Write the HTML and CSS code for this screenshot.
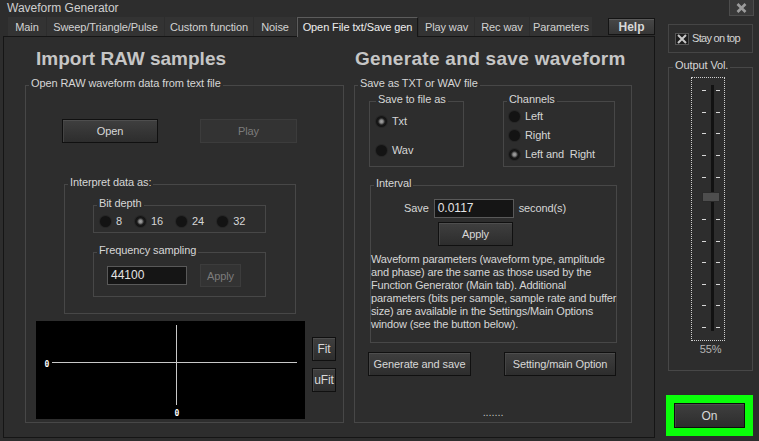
FILE: index.html
```html
<!DOCTYPE html>
<html>
<head>
<meta charset="utf-8">
<title>Waveform Generator</title>
<link rel="stylesheet" href="styles.css">
</head>
<body>
<div class="window">
  <header class="titlebar">
    <span class="title">Waveform Generator</span>
    <button class="close" aria-label="Close">
      <svg width="11" height="10" viewBox="0 0 11 10"><path d="M1.5 1 L9.5 9 M9.5 1 L1.5 9" stroke="#9c9c9c" stroke-width="2.6" fill="none"/></svg>
    </button>
  </header>
  <div class="content">
    <div class="main">
      <nav class="tabs">
        <span class="tab t-main">Main</span>
        <span class="tab t-sweep">Sweep/Triangle/Pulse</span>
        <span class="tab t-custom">Custom function</span>
        <span class="tab t-noise">Noise</span>
        <span class="tab t-open active">Open File txt/Save gen</span>
        <span class="tab t-play">Play wav</span>
        <span class="tab t-rec">Rec wav</span>
        <span class="tab t-params">Parameters</span>
        <button class="help">Help</button>
      </nav>
      <section class="panel">
        <div class="col col-left">
          <h2 class="heading h-left">Import RAW samples</h2>
          <div class="group g-open">
            <span class="legend lg-open">Open RAW waveform data from text file</span>
            <div class="open-row">
              <button class="btn b-open">Open</button>
              <button class="btn disabled b-play">Play</button>
            </div>
            <div class="group g-interpret">
              <span class="legend lg-3">Interpret data as:</span>
              <div class="group g-bits">
                <span class="legend lg-3">Bit depth</span>
                <div class="bits-row">
                  <span class="radio"><span class="dot"></span>8</span>
                  <span class="radio"><span class="dot on"></span>16</span>
                  <span class="radio"><span class="dot"></span>24</span>
                  <span class="radio"><span class="dot"></span>32</span>
                </div>
              </div>
              <div class="group g-freq">
                <span class="legend lg-3">Frequency sampling</span>
                <div class="freq-row">
                  <span class="input in-freq">44100</span>
                  <button class="btn disabled b-apply-sm">Apply</button>
                </div>
              </div>
            </div>
            <div class="scope-row">
              <div class="scope">
                <svg width="269" height="98" viewBox="0 0 269 98">
                  <rect x="0" y="0" width="269" height="98" fill="#000"/>
                  <line x1="16" y1="41.5" x2="261" y2="41.5" stroke="#c8c8c8" stroke-width="1"/>
                  <line x1="140.5" y1="4" x2="140.5" y2="84" stroke="#c8c8c8" stroke-width="1"/>
                  <text x="8.6" y="45.5" class="axis-label">0</text>
                  <text x="138.6" y="94.5" class="axis-label">0</text>
                </svg>
              </div>
              <div class="fit-col">
                <button class="btn b-fit">Fit</button>
                <button class="btn b-fit">uFit</button>
              </div>
            </div>
          </div>
        </div>
        <div class="col col-right">
          <h2 class="heading h-right">Generate and save waveform</h2>
          <div class="group g-save">
            <span class="legend lg-3">Save as TXT or WAV file</span>
            <div class="save-row">
              <div class="group g-saveto">
                <span class="legend lg-saveto">Save to file as</span>
                <div class="radio-col rc-saveto">
                  <span class="radio"><span class="dot on"></span>Txt</span>
                  <span class="radio"><span class="dot"></span>Wav</span>
                </div>
              </div>
              <div class="group g-channels">
                <span class="legend lg-ch">Channels</span>
                <div class="radio-col rc-ch">
                  <span class="radio"><span class="dot"></span>Left</span>
                  <span class="radio"><span class="dot"></span>Right</span>
                  <span class="radio"><span class="dot on"></span>Left and&nbsp; Right</span>
                </div>
              </div>
            </div>
            <div class="group g-interval">
              <span class="legend lg-3">Interval</span>
              <div class="interval-row">
                <span>Save</span>
                <span class="input in-interval">0.0117</span>
                <span>second(s)</span>
              </div>
              <button class="btn b-apply">Apply</button>
              <p class="info">Waveform parameters (waveform type, amplitude<br>and phase) are the same as those used by the<br>Function Generator (Main tab). Additional<br>parameters (bits per sample, sample rate and buffer<br>size) are available in the Settings/Main Options<br>window (see the button below).</p>
            </div>
            <div class="gen-row">
              <button class="btn b-gen">Generate and save</button>
              <button class="btn b-set">Setting/main Option</button>
            </div>
            <div class="dots">.......</div>
          </div>
        </div>
      </section>
    </div>
    <aside class="side">
      <div class="stay">
        <span class="check">
          <svg width="12" height="10" viewBox="0 0 12 10"><path d="M2 1 L10 9 M10 1 L2 9" stroke="#c8c8c8" stroke-width="2" fill="none"/></svg>
        </span>
        <span class="stay-text">Stay on top</span>
      </div>
      <div class="group g-vol">
        <span class="legend lg-vol">Output Vol.</span>
        <div class="slider">
          <svg width="32" height="262" viewBox="0 0 32 262">
            <rect x="19" y="7" width="3" height="246" fill="#121212"/>
            <g fill="#d8d8d8">
              <rect x="10" y="12" width="4" height="1"/><rect x="24" y="12" width="4" height="1"/>
              <rect x="10" y="34" width="4" height="1"/><rect x="24" y="34" width="4" height="1"/>
              <rect x="10" y="55" width="4" height="1"/><rect x="24" y="55" width="4" height="1"/>
              <rect x="10" y="77" width="4" height="1"/><rect x="24" y="77" width="4" height="1"/>
              <rect x="10" y="99" width="4" height="1"/><rect x="24" y="99" width="4" height="1"/>
              <rect x="10" y="141" width="4" height="1"/><rect x="24" y="141" width="4" height="1"/>
              <rect x="10" y="163" width="4" height="1"/><rect x="24" y="163" width="4" height="1"/>
              <rect x="10" y="184" width="4" height="1"/><rect x="24" y="184" width="4" height="1"/>
              <rect x="10" y="206" width="4" height="1"/><rect x="24" y="206" width="4" height="1"/>
              <rect x="10" y="227" width="4" height="1"/><rect x="24" y="227" width="4" height="1"/>
              <rect x="10" y="249" width="4" height="1"/><rect x="24" y="249" width="4" height="1"/>
            </g>
            <rect x="10.5" y="114.5" width="17" height="9" fill="#4e4e4e" stroke="#2a2a2a"/>
          </svg>
        </div>
        <div class="pct">55%</div>
      </div>
      <div class="on-wrap">
        <button class="btn b-on">On</button>
      </div>
    </aside>
  </div>
</div>
</body>
</html>
```
FILE: styles.css
```css
* { box-sizing: border-box; }
html, body { margin: 0; padding: 0; }
body {
  width: 759px;
  height: 441px;
  overflow: hidden;
  background: #2d2d2d;
  color: #d6d6d6;
  font-family: "Liberation Sans", Arial, sans-serif;
  font-size: 11px;
  line-height: 13px;
  letter-spacing: -0.1px;
}
.window { width: 759px; height: 441px; }

/* title bar */
.titlebar { display: flex; height: 17px; }
.title { padding-left: 7px; font-size: 12px; line-height: 17px; color: #cfcfcf; letter-spacing: 0; }
.close {
  margin-left: auto;
  margin-right: 5px;
  width: 25px;
  height: 16px;
  padding: 0;
  border: 1px solid #4c4c4c;
  border-top: none;
  background: #393939;
  display: flex;
  align-items: center;
  justify-content: center;
}

.content { display: flex; align-items: flex-start; }
.main { margin-left: 3px; width: 652px; }

/* tabs */
.tabs { display: flex; align-items: flex-start; height: 19px; padding-left: 5px; position: relative; z-index: 1; }
.tab {
  height: 19px;
  margin-right: 1px;
  background: #333333;
  color: #d2d2d2;
  text-align: center;
  line-height: 17px;
  padding-top: 2px;
  white-space: nowrap;
}
.tab.active {
  height: 20px;
  margin-bottom: -1px;
  background: #2d2d2d;
  border: 1px solid #5c5c5c;
  border-right-color: #161616;
  border-bottom: none;
  padding-top: 1px;
  color: #ededed;
}
.t-main { width: 38px; }
.t-sweep { width: 117px; }
.t-custom { width: 88px; }
.t-noise { width: 42px; }
.t-open { width: 121px; }
.t-play { width: 55px; }
.t-rec { width: 54px; }
.t-params { width: 62px; }
.help {
  margin-left: auto;
  margin-top: 1px;
  width: 47px;
  height: 17px;
  padding: 0;
  font-family: "Liberation Sans", Arial, sans-serif;
  font-weight: bold;
  font-size: 12px;
  letter-spacing: 0;
  color: #d8d8d8;
  background: linear-gradient(#474747, #363636);
  border: 1px solid #141414;
  box-shadow: inset 0 1px 0 #5a5a5a;
}

/* panel */
.panel {
  height: 402px;
  border: 1px solid #151515;
  display: flex;
  gap: 10px;
  padding: 11px 0 0 21px;
}
.col { display: flex; flex-direction: column; }
.col-left { width: 319px; }
.col-right { width: 278px; }
.heading {
  margin: 0;
  height: 22px;
  font-size: 19px;
  line-height: 22px;
  font-weight: bold;
  color: #c6c6c6;
  letter-spacing: 0;
  white-space: nowrap;
}
.h-left { padding-left: 11px; }
.h-right { padding-left: 1px; letter-spacing: 0.3px; }

/* group boxes */
.group { border: 1px solid #474747; }
.legend {
  display: block;
  width: max-content;
  height: 13px;
  margin: -9px 0 0 3px;
  padding: 0 2px;
  background: #2d2d2d;
  line-height: 13px;
  white-space: nowrap;
}
.lg-3 { margin-left: 3px; }
.lg-open { margin-left: 3px; }
.lg-saveto { margin-left: 6px; }
.lg-ch { margin-left: 3px; }
.lg-vol { margin-left: 4px; }

.g-open { margin-top: 15px; height: 338px; }
.g-save { margin-top: 15px; height: 338px; }

/* buttons */
.btn {
  padding: 0;
  font-family: "Liberation Sans", Arial, sans-serif;
  font-size: 11px;
  letter-spacing: -0.1px;
  color: #d8d8d8;
  background: linear-gradient(#3f3f3f, #2d2d2d);
  border: 1px solid #101010;
  box-shadow: inset 0 1px 0 #4e4e4e, inset 1px 0 0 #444444;
  white-space: nowrap;
}
.btn.disabled {
  color: #7c7c7c;
  background: #333333;
  border-color: #3c3c3c;
  box-shadow: none;
}

.open-row { display: flex; gap: 42px; margin-top: 29px; padding-left: 36px; }
.b-open { width: 96px; height: 24px; }
.b-play { width: 97px; height: 24px; }

.g-interpret { margin: 41px 0 0 38px; width: 232px; height: 130px; }
.g-bits { margin: 16px 0 0 28px; width: 173px; height: 28px; }
.g-freq { margin: 19px 0 0 28px; width: 173px; height: 45px; }

.bits-row { display: flex; gap: 13px; height: 12px; margin-top: 5px; padding-left: 6px; }
.radio { display: flex; align-items: center; gap: 5px; height: 12px; white-space: nowrap; }
.dot {
  flex: none;
  width: 11px;
  height: 11px;
  border-radius: 50%;
  background: #131313;
  box-shadow: 0 0 0 1px #262626;
}
.dot.on { background: radial-gradient(circle, #a0a0a0 0, #8a8a8a 1.6px, #4a4a4a 2.6px, #1a1a1a 3.6px, #131313 5px); }

.freq-row { display: flex; align-items: center; gap: 13px; height: 23px; margin-top: 7px; padding-left: 13px; }
.input {
  display: block;
  height: 19px;
  padding-left: 3px;
  background: #151515;
  border: 1px solid #595959;
  color: #e4e4e4;
  font-size: 12px;
  line-height: 17px;
  letter-spacing: 0;
}
.in-freq { width: 80px; }
.b-apply-sm { width: 41px; height: 23px; }

.scope-row { display: flex; gap: 7px; margin: 7px 0 0 10px; }
.scope { width: 269px; height: 98px; background: #000; }
.scope svg { display: block; }
.axis-label { font-family: "DejaVu Sans Mono", monospace; font-size: 8px; font-weight: bold; fill: #ffffff; }
.fit-col { display: flex; flex-direction: column; gap: 7px; padding-top: 16px; }
.b-fit { width: 24px; height: 24px; font-size: 12px; }

/* right column */
.save-row { display: flex; gap: 39px; margin: 11px 0 0 14px; }
.g-saveto { width: 95px; height: 66px; }
.g-channels { width: 112px; height: 66px; }
.radio-col { display: flex; flex-direction: column; }
.rc-saveto { margin-top: 9px; padding-left: 6px; gap: 17px; }
.rc-ch { margin-top: 4px; padding-left: 5px; gap: 7px; }

.g-interval { margin: 18px 0 0 15px; width: 247px; height: 158px; }
.interval-row { display: flex; align-items: center; gap: 5px; height: 19px; margin-top: 9px; padding-left: 33px; }
.in-interval { width: 80px; }
.b-apply { display: block; width: 75px; height: 24px; margin: 4px 0 0 67px; }
.info { margin: 7px 0 0 0; line-height: 13px; white-space: nowrap; letter-spacing: -0.15px; }

.gen-row { display: flex; gap: 33px; margin: 9px 0 0 13px; }
.b-gen { width: 103px; height: 24px; }
.b-set { width: 112px; height: 24px; }
.dots { margin-top: 30px; text-align: center; line-height: 13px; color: #bdbdbd; }

/* side */
.side { margin-left: 13px; width: 85px; display: flex; flex-direction: column; }
.stay {
  margin-top: 7px;
  height: 29px;
  border: 1px solid #454545;
  display: flex;
  align-items: center;
  gap: 3px;
  padding-left: 6px;
}
.check {
  flex: none;
  width: 14px;
  height: 12px;
  background: #1c1c1c;
  border: 1px solid #555;
  display: flex;
  align-items: center;
  justify-content: center;
}
.check svg { display: block; }
.stay-text { white-space: nowrap; letter-spacing: -0.7px; color: #d4d4d4; }
.g-vol { margin-top: 14px; height: 304px; }
.slider { margin: 5px 0 0 22px; width: 34px; height: 264px; border: 1px dotted #cfcfcf; }
.slider svg { display: block; }
.pct { margin-top: 2px; text-align: center; line-height: 13px; color: #b5b5b5; }
.on-wrap {
  margin: 24px 0 0 -2px;
  width: 87px;
  height: 41px;
  padding: 8px;
  background: #0aff0a;
}
.b-on { display: block; width: 71px; height: 25px; font-size: 12px; border-color: #0c0c0c; }
```
